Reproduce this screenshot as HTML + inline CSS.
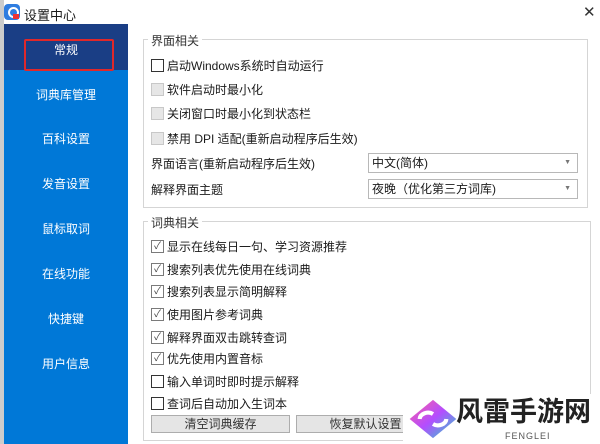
<!DOCTYPE html>
<html><head><meta charset="utf-8"><style>
body{margin:0;width:600px;height:444px;overflow:hidden;background:#fff;font-family:"Liberation Sans","Microsoft YaHei","Noto Sans CJK SC",sans-serif;font-size:12px;color:#1a1a1a;position:relative}
.a{position:absolute;white-space:nowrap}
.side{left:4px;top:24px;width:124px;height:420px;background:#0078d7}
.sel{left:4px;top:24px;width:124px;height:46px;background:#1a3e85}
.it{color:#fff;width:124px;left:4px;text-align:center;font-size:12px}
.gb{border:1px solid #d5d5d5}
.lbl{background:#fff;padding:0 3px;color:#333}
.cb{width:11px;height:11px;border:1px solid #333;background:#fff}
.cb.d{border-color:#c8c8c8;background:#e6e6e6}
.cb.c{border-color:#7a7a7a;font-size:10px;line-height:11px;text-align:center;color:#444}
.t{font-size:12px}
.combo{border:1px solid #b8b8b8;background:#fff;height:18px;line-height:18px;padding-left:3px;width:205px}
.btn{border:1px solid #adadad;background:#e5e5e5;height:16px;line-height:16px;text-align:center;color:#333}
</style></head><body>
<div class="a" style="left:0;top:0;width:4px;height:444px;background:#ccc"></div>
<div class="a" style="left:4px;top:4px;width:16px;height:16px;border-radius:4px;background:#2f7de0"></div>
<div class="a" style="left:8px;top:7px;width:7px;height:7px;border:2px solid #fff;border-radius:50%"></div>
<div class="a" style="left:13px;top:14px;width:6px;height:5px;background:#e33"></div>
<div class="a" style="left:24px;top:5px;font-size:13px">设置中心</div>
<div class="a" style="left:583px;top:3px;font-size:15px;color:#333">✕</div>
<div class="a side"></div><div class="a sel"></div>
<div class="a" style="left:24px;top:39px;width:86px;height:28px;border:2px solid #e0282a;border-radius:2px"></div>
<div class="a it" style="top:41px">常规</div>
<div class="a it" style="top:86px">词典库管理</div>
<div class="a it" style="top:130px">百科设置</div>
<div class="a it" style="top:175px">发音设置</div>
<div class="a it" style="top:220px">鼠标取词</div>
<div class="a it" style="top:265px">在线功能</div>
<div class="a it" style="top:310px">快捷键</div>
<div class="a it" style="top:355px">用户信息</div>

<div class="a gb" style="left:143px;top:39px;width:443px;height:167px"></div>
<div class="a lbl" style="left:148px;top:32px">界面相关</div>
<div class="a cb" style="left:151px;top:59px"></div><div class="a t" style="left:167px;top:57px">启动Windows系统时自动运行</div>
<div class="a cb d" style="left:151px;top:83px"></div><div class="a t" style="left:167px;top:81px">软件启动时最小化</div>
<div class="a cb d" style="left:151px;top:107px"></div><div class="a t" style="left:167px;top:105px">关闭窗口时最小化到状态栏</div>
<div class="a cb d" style="left:151px;top:132px"></div><div class="a t" style="left:167px;top:130px">禁用 DPI 适配(重新启动程序后生效)</div>
<div class="a t" style="left:151px;top:155px">界面语言(重新启动程序后生效)</div>
<div class="a t" style="left:151px;top:181px">解释界面主题</div>
<div class="a combo" style="left:368px;top:153px">中文(简体)<span style="position:absolute;right:6px;font-size:7px;color:#777">▼</span></div>
<div class="a combo" style="left:368px;top:179px">夜晚（优化第三方词库)<span style="position:absolute;right:6px;font-size:7px;color:#777">▼</span></div>

<div class="a gb" style="left:143px;top:221px;width:446px;height:218px"></div>
<div class="a lbl" style="left:148px;top:214px">词典相关</div>
<div class="a cb c" style="left:151px;top:240px">✓</div><div class="a t" style="left:167px;top:238px">显示在线每日一句、学习资源推荐</div>
<div class="a cb c" style="left:151px;top:263px">✓</div><div class="a t" style="left:167px;top:261px">搜索列表优先使用在线词典</div>
<div class="a cb c" style="left:151px;top:285px">✓</div><div class="a t" style="left:167px;top:283px">搜索列表显示简明解释</div>
<div class="a cb c" style="left:151px;top:308px">✓</div><div class="a t" style="left:167px;top:306px">使用图片参考词典</div>
<div class="a cb c" style="left:151px;top:331px">✓</div><div class="a t" style="left:167px;top:329px">解释界面双击跳转查词</div>
<div class="a cb c" style="left:151px;top:352px">✓</div><div class="a t" style="left:167px;top:350px">优先使用内置音标</div>
<div class="a cb" style="left:151px;top:375px"></div><div class="a t" style="left:167px;top:373px">输入单词时即时提示解释</div>
<div class="a cb" style="left:151px;top:397px"></div><div class="a t" style="left:167px;top:395px">查词后自动加入生词本</div>
<div class="a btn" style="left:151px;top:415px;width:137px">清空词典缓存</div>
<div class="a btn" style="left:296px;top:415px;width:137px">恢复默认设置</div>

<div class="a" style="left:403px;top:394px;width:197px;height:50px;background:#fff"></div>
<svg class="a" style="left:408px;top:394px" width="50" height="50" viewBox="0 0 60 50">
<defs><linearGradient id="g" x1="0" y1="0" x2="1" y2="1"><stop offset="0" stop-color="#ff5fa0"/><stop offset=".5" stop-color="#b34dff"/><stop offset="1" stop-color="#2ad4c8"/></linearGradient></defs>
<polygon points="30,2 58,25 30,48 2,25" fill="url(#g)"/>
<path d="M14 25 a10 8 0 0 1 16 -6 M46 25 a10 8 0 0 1 -16 6" stroke="#fff" stroke-width="5" fill="none"/>
</svg>
<div class="a" style="left:456px;top:397px;font-size:27px;font-weight:bold;color:#222;line-height:30px">风雷手游网</div>
<div class="a" style="left:505px;top:431px;font-size:9px;color:#555;letter-spacing:1px">FENGLEI</div>
</body></html>
